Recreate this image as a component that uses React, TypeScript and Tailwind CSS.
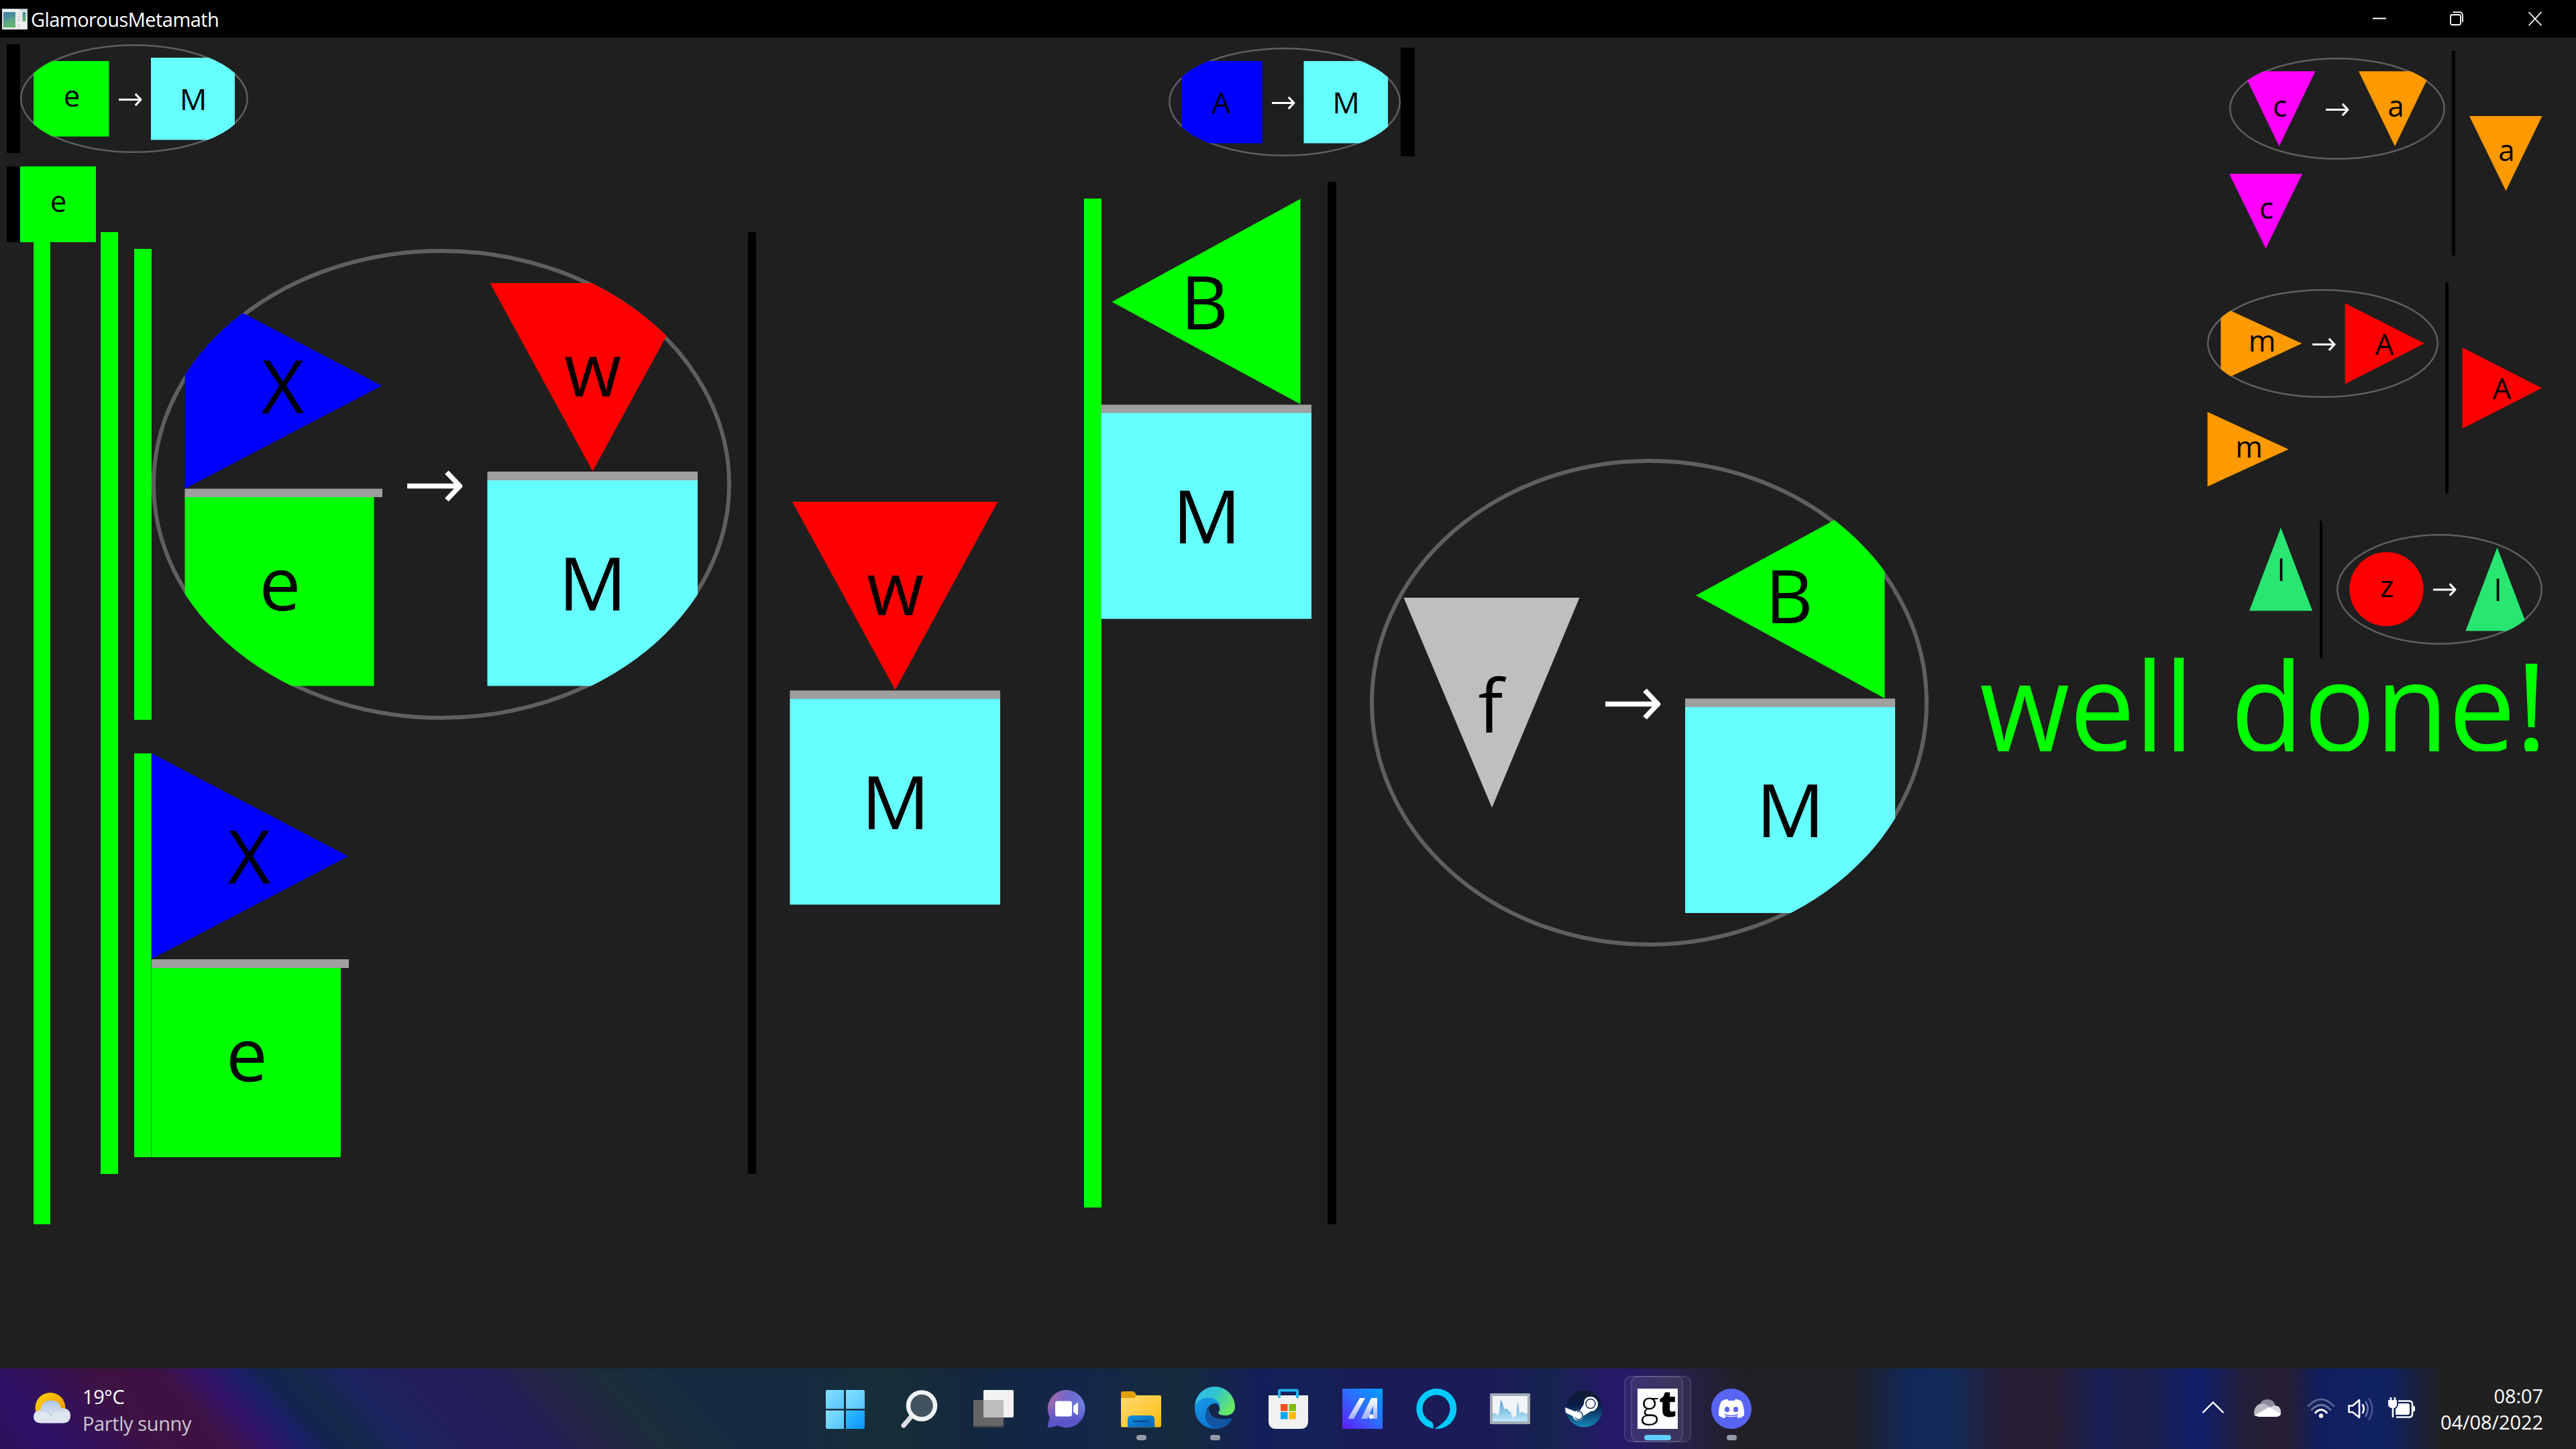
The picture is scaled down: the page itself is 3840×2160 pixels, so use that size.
import React from "react";

const GREEN = "#00ff00";
const CYAN = "#66ffff";
const BLUE = "#0000ff";
const RED = "#ff0000";
const ORANGE = "#ff9900";
const MAGENTA = "#ff00ff";
const SILVER = "#bfbfbf";
const EMERALD = "#28e670";
const RING = "#5f5f5f";
const BAR = "#9f9f9f";

type LetterProps = { x: number; y: number; size?: number; sx?: number; children: string };

/** A symbol name; x is the horizontal centre and y the baseline. */
function Letter({ x, y, size = 110, sx = 1, children }: LetterProps) {
  return (
    <text
      transform={`translate(${x} ${y}) scale(${sx} 1)`}
      textAnchor="middle"
      fontSize={size}
      fill="#000"
      fontFamily='"Open Sans", "Noto Sans", sans-serif'
    >
      {children}
    </text>
  );
}

function Arrow({ x, y, k = 1 }: { x: number; y: number; k?: number }) {
  return (
    <path
      transform={`translate(${x} ${y}) scale(${k})`}
      d="M0 0H79M59 -20.5L78.5 0L59 20.5"
      fill="none"
      stroke="#fff"
      strokeWidth={7.5}
      strokeLinejoin="round"
    />
  );
}

type PieceProps = { className: string; w: number; h: number; children: React.ReactNode };

/** A free-standing piece on the board. */
function Piece({ className, w, h, children }: PieceProps) {
  return (
    <svg className={`absolute block ${className}`} width={w} height={h} viewBox={`0 0 ${w} ${h}`}>
      {children}
    </svg>
  );
}

type ImplicationProps = PieceProps & { id: string; stroke: number };

/** An ellipse whose contents are cut off at its outline. */
function Implication({ id, className, w, h, stroke, children }: ImplicationProps) {
  const e = { cx: w / 2, cy: h / 2 };
  return (
    <Piece className={className} w={w} h={h}>
      <clipPath id={id}>
        <ellipse {...e} rx={w / 2} ry={h / 2} />
      </clipPath>
      <ellipse {...e} rx={w / 2 - stroke / 2} ry={h / 2 - stroke / 2} fill="none" stroke={RING} strokeWidth={stroke} />
      <g clipPath={`url(#${id})`}>{children}</g>
    </Piece>
  );
}

function Board() {
  return (
    <main className="relative flex-1 overflow-hidden bg-[#1f1f1f]">
      {/* upper left goals */}
      <div className="absolute left-[10px] top-[10px] h-[162px] w-[20px] bg-black" />
      <Implication id="i-em" className="left-[30px] top-[10px]" w={340} h={162} stroke={2.5}>
        <rect x={20} y={25} width={112.5} height={112.5} fill={GREEN} />
        <Letter x={77} y={92.5} size={44}>e</Letter>
        <Arrow x={147} y={82.5} k={0.42} />
        <rect x={195} y={20} width={125} height={122.5} fill={CYAN} />
        <Letter x={258} y={97.5} size={44} sx={1.03}>M</Letter>
      </Implication>

      {/* left rails */}
      <div className="absolute left-[50px] top-[290px] h-[1479px] w-[25px] bg-[#00ff00]" />
      <div className="absolute left-[150px] top-[290px] h-[1404px] w-[26px] bg-[#00ff00]" />
      <div className="absolute left-[200px] top-[315px] h-[702px] w-[26px] bg-[#00ff00]" />
      <div className="absolute left-[200px] top-[1067px] h-[602px] w-[26px] border-r border-[#00b000] bg-[#00ff00]" />

      <div className="absolute left-[10px] top-[192px] h-[113px] w-[20px] bg-black" />
      <Piece className="left-[30px] top-[192px]" w={113} h={113}>
        <rect width={113} height={113} fill={GREEN} />
        <Letter x={57} y={67.5} size={44}>e</Letter>
      </Piece>

      {/* X over e implies w over M */}
      <Implication id="i-xewm" className="left-[226px] top-[315px]" w={864} h={702} stroke={6}>
        <polygon points="49.5,50.5 343,204 49.5,357.5" fill={BLUE} />
        <Letter x={195.5} y={245}>X</Letter>
        <rect x={49.5} y={357.5} width={294.5} height={12.5} fill={BAR} />
        <rect x={49.5} y={370} width={282} height={281.5} fill={GREEN} />
        <Letter x={191.5} y={538.5}>e</Letter>
        <Arrow x={381} y={353.5} />
        <polygon points="504.5,51 810.5,51 657.5,331.5" fill={RED} />
        <Letter x={657.5} y={220}>w</Letter>
        <rect x={500.5} y={332} width={313.5} height={13} fill={BAR} />
        <rect x={500.5} y={345} width={313.5} height={306.5} fill={CYAN} />
        <Letter x={657.5} y={538.5} sx={1.03}>M</Letter>
      </Implication>

      <Piece className="left-[226px] top-[1067px]" w={294} h={602}>
        <polygon points="0,0 293,153.5 0,306.5" fill={BLUE} />
        <Letter x={145.5} y={193.5}>X</Letter>
        <rect y={307} width={294} height={13} fill={BAR} />
        <rect y={320} width={282} height={282} fill={GREEN} />
        <Letter x={142} y={488.5}>e</Letter>
      </Piece>

      <div className="absolute left-[1115px] top-[290px] h-[1404px] w-[12px] bg-black" />

      <Piece className="left-[1177px] top-[692px]" w={315} h={601}>
        <polygon points="4,0 310.5,0 157.5,280.5" fill={RED} />
        <Letter x={157.5} y={168.5}>w</Letter>
        <rect x={0.5} y={281.3} width={313.5} height={12.5} fill={BAR} />
        <rect x={0.5} y={293.7} width={313.5} height={306.8} fill={CYAN} />
        <Letter x={158} y={488} sx={1.03}>M</Letter>
      </Piece>

      {/* A implies M */}
      <Implication id="i-am" className="left-[1742px] top-[15px]" w={346} h={162} stroke={2.5}>
        <rect x={19.5} y={20} width={120} height={122.5} fill={BLUE} />
        <Letter x={78.5} y={97.5} size={44}>A</Letter>
        <Arrow x={154} y={82.5} k={0.42} />
        <rect x={201.5} y={20} width={125.5} height={122.5} fill={CYAN} />
        <Letter x={264.5} y={97.5} size={44} sx={1.03}>M</Letter>
      </Implication>
      <div className="absolute left-[2088px] top-[15px] h-[162px] w-[21px] bg-black" />

      {/* B over M */}
      <div className="absolute left-[1616px] top-[240px] h-[1504px] w-[26px] bg-[#00ff00]" />
      <Piece className="left-[1641px] top-[240px]" w={315} h={627}>
        <polygon points="16.5,154 297.5,0.5 297.5,306.5" fill={GREEN} />
        <Letter x={154.5} y={195}>B</Letter>
        <rect x={0.5} y={307.3} width={313.5} height={12.5} fill={BAR} />
        <rect x={0.5} y={319.5} width={313.5} height={307} fill={CYAN} />
        <Letter x={158} y={514} sx={1.03}>M</Letter>
      </Piece>

      <div className="absolute left-[1979px] top-[215px] h-[1554px] w-[13px] bg-black" />

      {/* f implies B over M */}
      <Implication id="i-fbm" className="left-[2042px] top-[628px]" w={833} h={727} stroke={6}>
        <polygon points="50.5,207 312.5,207 182,520" fill={SILVER} />
        <Letter x={180} y={407.5}>f</Letter>
        <Arrow x={351} y={365.5} />
        <polygon points="486,203.5 767.5,50.5 767.5,357" fill={GREEN} />
        <Letter x={625} y={245}>B</Letter>
        <rect x={470} y={357.3} width={313} height={13} fill={BAR} />
        <rect x={470} y={370} width={313} height={307} fill={CYAN} />
        <Letter x={627} y={564} sx={1.03}>M</Letter>
      </Implication>

      {/* rule list */}
      <Implication id="i-ca" className="left-[3323px] top-[30px]" w={322} h={152} stroke={2.5}>
        <polygon points="20.5,20.3 128.5,20.3 74.5,132" fill={MAGENTA} />
        <Letter x={75.5} y={87.5} size={44}>c</Letter>
        <Arrow x={144} y={77.5} k={0.42} />
        <polygon points="193,20.3 301,20.3 247,132" fill={ORANGE} />
        <Letter x={248.5} y={87.5} size={44}>a</Letter>
      </Implication>
      <div className="absolute left-[3655px] top-[20px] h-[305px] w-[5px] bg-black" />
      <Piece className="left-[3681px] top-[117px]" w={109} h={112}>
        <polygon points="0,0 108.5,0 54.5,111.5" fill={ORANGE} />
        <Letter x={55.5} y={67} size={44}>a</Letter>
      </Piece>
      <Piece className="left-[3323px] top-[203px]" w={109} h={112}>
        <polygon points="0,0 109,0 54.5,111.5" fill={MAGENTA} />
        <Letter x={55.5} y={67} size={44}>c</Letter>
      </Piece>

      <Implication id="i-ma" className="left-[3290px] top-[375px]" w={345} h={162} stroke={2.5}>
        <polygon points="20.5,25.5 141.5,81 20.5,137" fill={ORANGE} />
        <Letter x={82} y={92.500} size={44}>m</Letter>
        <Arrow x={157} y={82.5} k={0.42} />
        <polygon points="205.7,21 324,81 205.7,141.5" fill={RED} />
        <Letter x={264.5} y={98} size={44}>A</Letter>
      </Implication>
      <div className="absolute left-[3645px] top-[365px] h-[315px] w-[5px] bg-black" />
      <Piece className="left-[3670px] top-[462px]" w={120} h={122}>
        <polygon points="0.5,0 119,60.5 0.5,121" fill={RED} />
        <Letter x={59.5} y={77} size={44}>A</Letter>
      </Piece>
      <Piece className="left-[3290px] top-[558px]" w={122} h={112}>
        <polygon points="0.7,0 121.5,55.7 0.7,111.3" fill={ORANGE} />
        <Letter x={62.5} y={67.5} size={44}>m</Letter>
      </Piece>

      <Piece className="left-[3353px] top-[730px]" w={94} h={125}>
        <polygon points="47,0.5 94,124.5 0,124.5" fill={EMERALD} />
        <Letter x={47.5} y={80} size={44}>l</Letter>
      </Piece>
      <div className="absolute left-[3458px] top-[720px] h-[205px] w-[4px] bg-black" />
      <Implication id="i-zl" className="left-[3483px] top-[740px]" w={307} h={165} stroke={2.5}>
        <circle cx={74.5} cy={82.3} r={55.2} fill={RED} />
        <Letter x={75} y={94} size={44}>z</Letter>
        <Arrow x={144} y={83} k={0.42} />
        <polygon points="239.5,20 192.5,144.5 287,144.5" fill={EMERALD} />
        <Letter x={240.5} y={100} size={44}>l</Letter>
      </Implication>

      <Piece className="left-[2940px] top-[900px]" w={900} h={164}>
        <text y={164} fontSize={184} fill={GREEN} fontFamily='"Open Sans", "Noto Sans", sans-serif'>
          <tspan x={11} textLength={319} lengthAdjust="spacingAndGlyphs">
            well
          </tspan>
          <tspan x={385} textLength={472} lengthAdjust="spacingAndGlyphs">
            done!
          </tspan>
        </text>
      </Piece>
    </main>
  );
}

function TitleBar() {
  return (
    <header className="flex h-[56px] shrink-0 items-center bg-black text-white">
      <svg className="ml-[3px] block" width="38" height="31" viewBox="0 0 38 31">
        <defs>
          <linearGradient id="app-a" x1="0" y1="0" x2="0.3" y2="1">
            <stop offset="0" stopColor="#4a86b0" />
            <stop offset="1" stopColor="#63b56d" />
          </linearGradient>
        </defs>
        <rect width="38" height="31" fill="#eceeef" stroke="#b9bfc6" />
        <rect x="26" y="1" width="11" height="1.6" fill="#b4b9bf" />
        <rect x="2" y="5" width="18" height="23" fill="url(#app-a)" />
        <path d="M2 20Q8 12 20 11V5H2Z" fill="#3f7ea8" opacity=".45" />
        <path d="M22 6h6M22 9h6M22 12h6M22 15h6M22 18h6M22 24h6M22 27h6" stroke="#c9cdd1" />
        <rect x="30.500" y="5" width="5" height="14" fill="url(#app-a)" />
      </svg>
      <span className="ml-[5px] whitespace-nowrap pt-px text-[29px] leading-none tracking-[-0.55px]">GlamorousMetamath</span>
      <div className="ml-auto flex items-center">
        <svg className="mr-[95px] block" width="20" height="22" viewBox="0 0 20 22">
          <path d="M0 10.500H20" stroke="#fff" strokeWidth="2" />
        </svg>
        <svg className="mr-[97px] block" width="20" height="22" viewBox="0 0 20 22" fill="none" stroke="#fff" strokeWidth="1.800">
          <rect x="1" y="5" width="15" height="15" rx="2.500" />
          <path d="M4.500 1.200H14Q19 1.200 19 6V16" />
        </svg>
        <svg className="mr-[51px] block" width="20" height="22" viewBox="0 0 20 22">
          <path d="M.5 1L19.500 21M19.500 1L.5 21" stroke="#fff" strokeWidth="1.800" />
        </svg>
      </div>
    </header>
  );
}

const Icon = ({ children }: { children: React.ReactNode }) => (
  <svg className="block overflow-visible" width="60" height="60" viewBox="0 0 60 60">
    {children}
  </svg>
);

type SlotProps = { children: React.ReactNode; state?: "running" | "active" };

function Slot({ children, state }: SlotProps) {
  return (
    <div className="relative flex h-[120px] w-[110px] items-center justify-center">
      {state === "active" && (
        <>
          <div className="absolute left-[16px] top-[11px] h-[99px] w-[90px] rounded-[10px] border-2 border-white/10 bg-white/5" />
          <div className="absolute left-[6px] top-[11px] h-[99px] w-[88px] rounded-[10px] border-2 border-white/10 bg-white/5" />
        </>
      )}
      <div className="relative">{children}</div>
      {state === "running" && <div className="absolute left-[49px] top-[99px] h-[8px] w-[15px] rounded-full bg-[#949ba6]" />}
      {state === "active" && <div className="absolute left-[36px] top-[99px] h-[8px] w-[40px] rounded-full bg-[#60cdff]" />}
    </div>
  );
}

function TaskIcons() {
  return (
    <nav className="flex">
      <Slot>
        <Icon>
          <defs>
            <linearGradient id="win" x1="0" y1="0" x2="1" y2="1">
              <stop offset="0" stopColor="#86e0ff" />
              <stop offset="1" stopColor="#55c3ff" />
            </linearGradient>
            <linearGradient id="win2" x1="0" y1="0" x2="1" y2="1">
              <stop offset="0" stopColor="#35bdff" />
              <stop offset="1" stopColor="#0a94ff" />
            </linearGradient>
          </defs>
          <path d="M3 2H28V30H1V4Q1 2 3 2Z" fill="url(#win)" />
          <path d="M31 2H57Q59 2 59 4V30H31Z" fill="url(#win)" />
          <path d="M1 32.500H28V60H3Q1 60 1 58Z" fill="url(#win)" />
          <path d="M31 32.500H59V58Q59 60 57 60H31Z" fill="url(#win2)" />
        </Icon>
      </Slot>
      <Slot>
        <Icon>
          <path d="M18 42L7 55" stroke="#dcdfe2" strokeWidth="7" strokeLinecap="round" />
          <circle cx="34" cy="25.500" r="20" fill="#42535f" stroke="#f0f1f2" strokeWidth="6.500" />
        </Icon>
      </Slot>
      <Slot>
        <Icon>
          <rect x="1" y="17" width="45" height="40.500" rx="2" fill="#666" />
          <path d="M1 55.500H46V56.500Q46 58 44 58H3Q1 58 1 56.500Z" fill="#444" />
          <rect x="16" y="2" width="45" height="41" rx="2" fill="#f2f2f2" />
          <path d="M16 17H46V43H18Q16 43 16 41Z" fill="#bdbdbd" />
        </Icon>
      </Slot>
      <Slot>
        <Icon>
          <defs>
            <linearGradient id="chat" x1="0" y1="0.200" x2="1" y2="0.600">
              <stop offset="0" stopColor="#a866a8" />
              <stop offset=".5" stopColor="#6d68cc" />
              <stop offset="1" stopColor="#6f86e6" />
            </linearGradient>
            <linearGradient id="chat2" x1="0" y1="0" x2="0" y2="1">
              <stop offset=".4" stopColor="#5b55c8" stopOpacity="0" />
              <stop offset=".85" stopColor="#5a54c8" />
            </linearGradient>
          </defs>
          <path d="M30 2A28 28 0 1 1 16 54.500Q10 58 2.500 57.500Q1.500 57 2 55L5 43A28 28 0 0 1 30 2Z" fill="url(#chat)" />
          <path d="M30 2A28 28 0 1 1 16 54.500Q10 58 2.500 57.500Q1.500 57 2 55L5 43A28 28 0 0 1 30 2Z" fill="url(#chat2)" />
          <rect x="13" y="18.500" width="25" height="23" rx="3.500" fill="#fff" />
          <path d="M40 26L45 21.500Q47 20.500 47 22.500V38Q47 40 45 39L40 34.500Z" fill="#fff" />
        </Icon>
      </Slot>
      <Slot state="running">
        <Icon>
          <defs>
            <linearGradient id="fold" x1="0" y1="0" x2="1" y2="1">
              <stop offset="0" stopColor="#ffdb72" />
              <stop offset=".6" stopColor="#ffc937" />
              <stop offset="1" stopColor="#f9b50c" />
            </linearGradient>
            <linearGradient id="fold2" x1="0" y1="0" x2="1" y2="1">
              <stop offset="0" stopColor="#1691e0" />
              <stop offset="1" stopColor="#0260b8" />
            </linearGradient>
          </defs>
          <path d="M1 7Q1 4 3.500 4H19Q21 4 25 10.500L25 20H1Z" fill="#e3a106" />
          <path d="M1 14H21Q24 10 26 10H59Q61 10 61 12V55.500Q61 57.500 59 57.500H3Q1 57.500 1 55.500Z" fill="url(#fold)" />
          <path d="M11 57.500V46Q11 40 17 40H45Q51 40 51 46V57.500Z" fill="url(#fold2)" />
          <rect x="19" y="47.500" width="24" height="2.500" rx="1" fill="#0b4a8c" />
        </Icon>
      </Slot>
      <Slot state="running">
        <Icon>
          <defs>
            <linearGradient id="ed1" x1="0" y1="0" x2="1" y2=".5">
              <stop offset="0" stopColor="#35b8f5" />
              <stop offset=".5" stopColor="#2fc4cf" />
              <stop offset="1" stopColor="#66e866" />
            </linearGradient>
            <linearGradient id="ed2" x1="0" y1="0" x2=".3" y2="1">
              <stop offset="0" stopColor="#1a9be8" />
              <stop offset="1" stopColor="#0a78d4" />
            </linearGradient>
          </defs>
          <path d="M1 27A30 30 0 0 1 61 27C61 36 54 40 47 40Q37 40 36 36Q39 32 38 28C35 17 13 12 1 27Z" fill="url(#ed1)" />
          <path d="M1 27C5 12 27 9 36 20Q39 24 38 28Q37 22 31 22C21 23 15 34 19 44Q23 55 33 60A30 30 0 0 1 1 30Z" fill="url(#ed2)" />
          <path d="M23 28C19 34 27 50 55 44Q57 44 56 46Q48 60 32 60C15 54 13 36 23 28Z" fill="#1255a3" />
        </Icon>
      </Slot>
      <Slot>
        <Icon>
          <path d="M17 14V4Q17 2.500 18.500 2.500H42.500Q44 2.500 44 4V14" fill="none" stroke="#22b6f2" strokeWidth="4" />
          <path d="M1 11Q1 10 2 10H60V48Q60 60 49 60H12Q1 60 1 48Z" fill="#f1f1f1" />
          <path d="M17 10V14M44 10V14" stroke="#22b6f2" strokeWidth="4" />
          <rect x="19" y="23" width="10.500" height="10.500" fill="#f34f1c" />
          <rect x="31.500" y="23" width="10.500" height="10.500" fill="#7fbc00" />
          <rect x="19" y="35" width="10.500" height="10.500" fill="#01a6f0" />
          <rect x="31.500" y="35" width="10.500" height="10.500" fill="#ffba01" />
        </Icon>
      </Slot>
      <Slot>
        <Icon>
          <defs>
            <linearGradient id="asus" x1="0" y1="1" x2="1" y2="0">
              <stop offset="0" stopColor="#611aff" />
              <stop offset=".5" stopColor="#2f6bff" />
              <stop offset="1" stopColor="#00a2ff" />
            </linearGradient>
            <linearGradient id="asus2" x1="0" y1="0" x2="0" y2="1">
              <stop offset="0" stopColor="#fff" />
              <stop offset="1" stopColor="#9fb2f5" />
            </linearGradient>
          </defs>
          <rect x="1" width="60" height="60" fill="url(#asus)" />
          <path d="M27 14H35L18 45H9Z" fill="url(#asus2)" />
          <path d="M44 14H53V45H47V26L38 45H29Z" fill="url(#asus2)" />
          <circle cx="44" cy="41.500" r="3.600" fill="#fff" />
        </Icon>
      </Slot>
      <Slot>
        <Icon>
          <path
            transform="translate(1 0)"
            d="M30 0A30 30 0 0 0 25.500 59.600V54Q25.500 51 22.500 49A20.500 20.500 0 1 1 50.500 30C50 45 38 53 28 59.900A30 30 0 1 0 30 0Z"
            fill="#00caff"
          />
        </Icon>
      </Slot>
      <Slot>
        <Icon>
          <defs>
            <linearGradient id="perf" x1="0" y1="0" x2="0" y2="1">
              <stop offset="0" stopColor="#4f9fd0" />
              <stop offset="1" stopColor="#bfe7fb" />
            </linearGradient>
          </defs>
          <g transform="translate(1 0)">
            <rect y="7" width="60" height="46" rx="1.500" fill="#a2abb2" />
            <rect x="4" y="11" width="52" height="38" fill="#f1f4f6" />
            <path d="M4 36.500H8L12 40L14 33L16 16.500L19 22L21 30H26L29 34H31L33 43L39 41L41.500 19L44 37L48 34L52 37H56V49H4Z" fill="url(#perf)" />
          </g>
        </Icon>
      </Slot>
      <Slot>
        <Icon>
          <defs>
            <linearGradient id="steam" x1="0" y1="0" x2="0" y2="1">
              <stop offset="0" stopColor="#111d2e" />
              <stop offset=".4" stopColor="#0a1b48" />
              <stop offset="1" stopColor="#1387b8" />
            </linearGradient>
          </defs>
          <g transform="translate(1 0)">
            <circle cx="30.500" cy="30" r="27.500" fill="url(#steam)" />
            <path d="M2 28L17 34Q21 32 24 33L30 23Q30 12 40 12A10.500 10.500 0 1 1 40 34L29 41Q28 47.500 21 47.500Q15 47 13.500 41L3 36Z" fill="#fff" />
            <circle cx="40" cy="22.500" r="7" fill="#fff" stroke="#0f2a52" strokeWidth="1.500" />
            <path d="M17 43A6 6 0 1 0 20 34.500" fill="none" stroke="#0f3a66" strokeWidth="1.500" />
          </g>
        </Icon>
      </Slot>
      <Slot state="active">
        <Icon>
          <rect x="1" width="60" height="60" fill="#fff" />
          <text transform="translate(6 42) scale(.95 1)" fontSize="54" fontWeight="300" fontFamily='"Open Sans", sans-serif' fill="#000">g</text>
          <text transform="translate(33 41.500) scale(1.050 1)" fontSize="54" fontWeight="800" fontFamily='"Open Sans", sans-serif' fill="#000">t</text>
        </Icon>
      </Slot>
      <Slot state="running">
        <Icon>
          <g transform="translate(1 0)">
            <circle cx="30" cy="30" r="30" fill="#5865f2" />
            <path
              d="M24 15.500Q18 16.500 15 19Q10.500 27 11 40Q15 43.500 20 44L22 41Q30 43.500 38 41L40 44Q45 43.500 49 40Q49.500 27 45 19Q42 16.500 36 15.500L34.500 18Q30 17.300 25.500 18Z"
              fill="#fff"
            />
            <ellipse cx="23.500" cy="31" rx="3.600" ry="3.900" fill="#5865f2" />
            <ellipse cx="36.500" cy="31" rx="3.600" ry="3.900" fill="#5865f2" />
            <path d="M20 38.500Q30 42.500 40 38.500" fill="none" stroke="#5865f2" strokeWidth="1.500" />
          </g>
        </Icon>
      </Slot>
    </nav>
  );
}

function Weather() {
  return (
    <div className="flex w-[1205px] shrink-0 items-center pl-[50px]">
      <svg className="block" width="56" height="48" viewBox="0 0 56 48">
        <defs>
          <linearGradient id="sun" x1="0" y1="0" x2="1" y2="1">
            <stop offset="0" stopColor="#ffd400" />
            <stop offset="1" stopColor="#f08a00" />
          </linearGradient>
          <linearGradient id="cl" x1="0" y1="0" x2="0" y2="1">
            <stop offset="0" stopColor="#a9c2ea" />
            <stop offset=".6" stopColor="#dfe6f0" />
            <stop offset="1" stopColor="#dde4ee" />
          </linearGradient>
        </defs>
        <circle cx="25" cy="22.500" r="22.500" fill="url(#sun)" />
        <path d="M10 29Q11 11.500 26 11.500Q39 12 41 23Q55 23 55 34Q55 45.500 43 45.500H11Q0 45 0 36Q0 27 10 26Z" fill="url(#cl)" />
        <path d="M11 26Q24 25 26 35Q30 25 41 23" fill="none" stroke="#b9c9e2" strokeWidth="1.200" />
      </svg>
      <div className="ml-[17px] flex flex-col pt-[4px] text-[29px] leading-[40px] tracking-[-0.4px]">
        <span className="text-white">19°C</span>
        <span className="text-[#cdc6d0]">Partly sunny</span>
      </div>
    </div>
  );
}

function Tray() {
  return (
    <div className="ml-auto flex items-center pr-[49px] text-white">
      <svg className="mr-[43px] block" width="34" height="40" viewBox="0 0 34 40" fill="none" stroke="#fff" strokeWidth="2.400">
        <path d="M1.500 26L17 10.500L32.500 26" />
      </svg>
      <svg className="mr-[38px] block" width="42" height="40" viewBox="0 0 42 40">
        <path d="M10 13Q13 6 21 6Q30 6 33 15L24 19Q16 11 10 13Z" fill="#8c8c9c" />
        <path d="M2 31Q-1 20 7 14Q16 9 25 18L4 31Z" fill="#bcb9c6" />
        <path d="M25 18Q32 13 38 17Q43 23 40 30L22 20Z" fill="#d8d6de" />
        <path d="M3 29L24 17.500L41 28Q39 32 34 32H9Q5 32 3 29Z" fill="#fff" />
      </svg>
      <svg className="mr-[19px] block" width="42" height="40" viewBox="0 0 42 40" fill="none" strokeLinecap="round" strokeWidth="2.800">
        <path d="M2 16Q21 -4 40 16" stroke="#5a6194" />
        <path d="M7 21.500Q21 7 35 21.500" stroke="#6d749f" />
        <path d="M12.500 26Q21 17 29.500 26" stroke="#fff" />
        <circle cx="21" cy="30.500" r="3.200" fill="#fff" />
      </svg>
      <svg className="mr-[20px] block" width="40" height="40" viewBox="0 0 40 40" fill="none" strokeWidth="2.600" strokeLinecap="round" strokeLinejoin="round">
        <path d="M1.500 15.500H7L17 7V33L7 25H1.500Z" stroke="#fff" />
        <path d="M22 14Q25.500 20 22 26" stroke="#fff" />
        <path d="M26.500 9.500Q33 20 26.500 31" stroke="#6a72ac" />
        <path d="M31.500 5Q41 20 31.500 36" stroke="#4c5594" />
      </svg>
      <svg className="mr-[36px] block" width="41" height="40" viewBox="0 0 41 40">
        <path d="M15 8.500H31Q36 8.500 36 13V28Q36 32.500 31 32.500H12" fill="none" stroke="#fff" strokeWidth="2.500" />
        <path d="M15 12H29Q32 12 32 15V26Q32 29 29 29H11V20Q15 18 15 12Z" fill="#fff" />
        <rect x="36" y="16" width="4" height="8" rx="1.500" fill="#fff" />
        <path d="M4 3V8M10 3V8M7 15V33" stroke="#fff" strokeWidth="2.600" />
        <path d="M0 7H13V13Q13 19 7 19Q0 19 0 13Z" fill="#fff" />
      </svg>
      <div className="flex w-[154px] flex-col items-end whitespace-nowrap text-[29px] leading-[39px] tracking-[-0.1px]">
        <span>08:07</span>
        <span>04/08/2022</span>
      </div>
    </div>
  );
}

function Taskbar() {
  return (
    <footer className="grid h-[120px] shrink-0 grid-cols-1 grid-rows-1 bg-[#202020]">
      <div className="col-start-1 row-start-1 flex">
        <div className="w-[1200px] bg-[linear-gradient(48deg,#2b1258_0px,#2d1168_60px,#33115c_107px,#3e1242_181px,#3d1244_255px,#34136a_300px,#1b1f6b_340px,#13244f_370px,#14284a_404px,#1b2460_456px,#221f5c_523px,#221f58_620px,#262348_660px,#1c2d3c_740px,#152c40_815px,#152b40_970px)]" />
        <div className="flex-1 bg-[linear-gradient(90deg,#152b40_0px,#172e38_130px,#14273f_240px,#13264a_400px,#152b3c_560px,#131f5a_680px,#142258_760px,#1a1c55_820px,#1c1b58_1020px,#162450_1110px,#28186c_1210px,#272050_1290px,#202024_1400px,#202026_1560px,#11285a_1650px,#132b58_1710px,#251e38_1780px,#281e32_1860px,#181f54_1930px,#1c1f48_1990px,#101f6a_2080px,#251e38_2150px,#251e35_2210px,#101f60_2260px,#102260_2360px,#202022_2440px,#202020_2640px)]" />
      </div>
      <div className="col-start-1 row-start-1 flex">
        <Weather />
        <TaskIcons />
        <Tray />
      </div>
    </footer>
  );
}

export default function App() {
  return (
    <div className='flex h-[2160px] w-[3840px] flex-col overflow-hidden bg-[#1f1f1f] font-["Open_Sans","Noto_Sans",sans-serif]'>
      <TitleBar />
      <Board />
      <Taskbar />
    </div>
  );
}
